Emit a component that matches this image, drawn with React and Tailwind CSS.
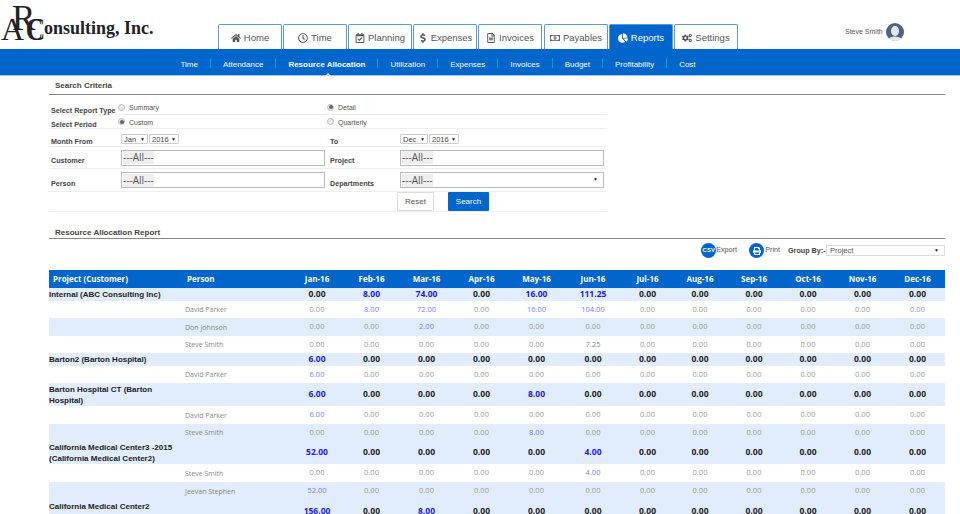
import { FaHome, FaRegClock, FaRegCalendarCheck, FaDollarSign, FaRegFileAlt, FaRegMoneyBillAlt, FaChartPie, FaCogs, FaPrint } from 'react-icons/fa';

const tabs = [
  { label: 'Home', icon: FaHome },
  { label: 'Time', icon: FaRegClock },
  { label: 'Planning', icon: FaRegCalendarCheck },
  { label: 'Expenses', icon: FaDollarSign },
  { label: 'Invoices', icon: FaRegFileAlt },
  { label: 'Payables', icon: FaRegMoneyBillAlt, extra: 'ml-px' },
  { label: 'Reports', icon: FaChartPie, active: true },
  { label: 'Settings', icon: FaCogs },
];

const subnav = ['Time', 'Attendance', 'Resource Allocation', 'Utilization', 'Expenses', 'Invoices', 'Budget', 'Profitability', 'Cost'];

const months = [
  { name: 'Jan-16', w: 'w-[54px]' },
  { name: 'Feb-16', w: 'w-[55px]' },
  { name: 'Mar-16', w: 'w-[55px]' },
  { name: 'Apr-16', w: 'w-[55px]' },
  { name: 'May-16', w: 'w-[55px]' },
  { name: 'Jun-16', w: 'w-[58px]' },
  { name: 'Jul-16', w: 'w-[51px]' },
  { name: 'Aug-16', w: 'w-[54px]' },
  { name: 'Sep-16', w: 'w-[54px]' },
  { name: 'Oct-16', w: 'w-[54px]' },
  { name: 'Nov-16', w: 'w-[55px]' },
  { name: 'Dec-16', w: 'w-[55px]' },
];

const z = (vals) => months.map((_, i) => vals[i] || '0.00');

const rows = [
  { project: 'Internal (ABC Consulting Inc)', h: 'h-[13px]', vals: z({ 1: '8.00', 2: '74.00', 4: '16.00', 5: '111.25' }) },
  { person: 'David Parker', h: 'h-[17px]', vals: z({ 1: '8.00', 2: '72.00', 4: '16.00', 5: '104.00' }) },
  { person: 'Don Johnson', h: 'h-[18px]', shade: true, vals: z({ 2: '2.00' }) },
  { person: 'Steve Smith', h: 'h-[17px]', vals: z({ 5: '7.25' }) },
  { project: 'Barton2 (Barton Hospital)', h: 'h-[13px]', vals: z({ 0: '6.00' }) },
  { person: 'David Parker', h: 'h-[17px]', vals: z({ 0: '6.00' }) },
  { project: 'Barton Hospital CT (Barton Hospital)', h: 'h-[23px]', vals: z({ 0: '6.00', 4: '8.00' }) },
  { person: 'David Parker', h: 'h-[18px]', vals: z({ 0: '6.00' }) },
  { person: 'Steve Smith', h: 'h-[17px]', shade: true, vals: z({ 4: '8.00' }) },
  { project: 'California Medical Center3 -2015 (California Medical Center2)', h: 'h-[23px]', vals: z({ 0: '52.00', 5: '4.00' }) },
  { person: 'Steve Smith', h: 'h-[18px]', vals: z({ 5: '4.00' }) },
  { person: 'Jeevan Stephen', h: 'h-[18px]', shade: true, vals: z({ 0: '52.00' }) },
  { project: 'California Medical Center2 (California Medical Center2)', h: 'h-[23px]', vals: z({ 0: '156.00', 2: '8.00' }) },
];

function Radio({ checked, label }) {
  return (
    <span className="flex items-center text-[7px] text-[#555] whitespace-nowrap">
      <span className="w-[7px] h-[7px] rounded-full border border-[#bbb] bg-[#e8e8e8] flex items-center justify-center mr-[4px] -mt-[2px] shrink-0">
        {checked && <span className="w-[4px] h-[4px] rounded-full bg-[#666]" />}
      </span>
      {label}
    </span>
  );
}

function MiniSelect({ value, w }) {
  return (
    <span className={`${w} h-[10px] border border-[#ccc] rounded-[1px] flex items-center justify-between px-[2px] text-[7.5px] text-[#444]`}>
      {value}
      <span className="text-[5px] text-[#222]">▼</span>
    </span>
  );
}

function AllBox({ caret }) {
  return (
    <div className="w-[204px] h-[16px] border border-[#bbb] flex items-center justify-between pl-px pr-[5px]">
      <span className="bg-[#eee] h-[13px] flex items-center text-[10px] text-[#555] font-['Open_Sans',sans-serif]">---All---</span>
      {caret && <span className="text-[5px] text-[#222]">▼</span>}
    </div>
  );
}

function Label({ children, className = '' }) {
  return <div className={`text-[7.2px] font-bold text-[#444] pl-[2px] whitespace-nowrap ${className}`}>{children}</div>;
}

function FormRow({ h, children }) {
  return (
    <div className={`${h} grid grid-cols-[69px_209px_73px_207px] items-center border-b border-[#eee]`}>
      {children}
    </div>
  );
}

export default function App() {
  return (
    <div className="w-[960px] h-[514px] overflow-hidden bg-white font-['Liberation_Sans',Arial,sans-serif]">
      {/* top */}
      <div className="h-[49px] relative flex">
        <div className="absolute left-0 top-0 w-[160px] h-[45px] font-['Liberation_Serif',serif] text-[#222]">
          <span className="absolute left-[1px] top-[13px] text-[32px] leading-none">A</span>
          <span className="absolute left-[12px] top-[1px] text-[35px] leading-none">R</span>
          <span className="absolute left-[26px] top-[14px] text-[31px] leading-none scale-x-80 origin-left">C</span>
          <span className="absolute left-[28px] top-[14px] text-[31px] leading-none scale-x-80 origin-left">C</span>
          <span className="absolute left-[44px] top-[19px] text-[18px] leading-none font-semibold whitespace-nowrap">onsulting, Inc.</span>
        </div>
        <div className="ml-[218px] mt-[24px] flex gap-px">
          {tabs.map((t) => {
            const Icon = t.icon;
            return (
              <div
                key={t.label}
                className={`w-[64px] h-[25px] pt-[2px] rounded-t-[2px] border border-b-0 border-[#5b9bd5] flex items-center justify-center gap-[3px] text-[9.5px] ${t.extra || ''} ${t.active ? 'bg-[#0066cc] text-white' : 'bg-white text-[#555]'}`}
              >
                <Icon className="text-[10px]" />
                {t.label}
              </div>
            );
          })}
        </div>
        <div className="absolute left-[845px] top-[23px] flex items-center gap-[3px]">
          <span className="text-[7px] text-[#555]">Steve Smith</span>
          <svg width="18" height="18" viewBox="0 0 18 18">
            <circle cx="9" cy="9" r="9" fill="#4f6288" />
            <ellipse cx="9" cy="8" rx="4" ry="5" fill="#e6eaef" />
            <path d="M2.5 16 C4 12.5 14 12.5 15.5 16 C13.5 18.5 4.5 18.5 2.5 16 Z" fill="#e6eaef" />
          </svg>
        </div>
      </div>

      {/* sub nav */}
      <div className="h-[27px] pt-[5px] pr-[84px] bg-[#0066cc] border-b border-[#9cc3ea] flex items-center justify-center relative">
        {subnav.map((s, i) => (
          <div key={s} className="flex items-center">
            {i > 0 && <span className="w-px h-[10px] -mt-[3px] bg-[#2a8fc4]" />}
            <span className={`px-[12px] text-[8px] text-white ${s === 'Resource Allocation' ? 'font-bold' : ''}`}>{s}</span>
          </div>
        ))}
        <span className="absolute left-[326px] bottom-[-3px] w-[4px] h-[4px] rotate-45 border-l border-t border-white" />
      </div>

      {/* search criteria */}
      <div className="ml-[49px] mr-[15px]">
        <div className="h-[19px] border-b border-[#888] flex items-end pl-[6px] pb-[2px] text-[8px] font-bold text-[#444]">Search Criteria</div>
        <div className="w-[558px] mt-[5px]">
          <FormRow h="h-[15px]">
            <Label className="mt-[6px]">Select Report Type</Label>
            <Radio label="Summary" />
            <Radio checked label="Detail" />
            <span />
          </FormRow>
          <FormRow h="h-[14px]">
            <Label className="mt-[5px]">Select Period</Label>
            <Radio checked label="Custom" />
            <Radio label="Quarterly" />
            <span />
          </FormRow>
          <FormRow h="h-[18px]">
            <Label className="mt-[8px]">Month From</Label>
            <div className="flex gap-[1px] mt-[2px] pl-[3px]">
              <MiniSelect value="Jan" w="w-[27px]" />
              <MiniSelect value="2016" w="w-[30px]" />
            </div>
            <Label className="mt-[8px] ml-px">To</Label>
            <div className="flex gap-[1px] mt-[2px]">
              <MiniSelect value="Dec" w="w-[28px]" />
              <MiniSelect value="2016" w="w-[30px]" />
            </div>
          </FormRow>
          <FormRow h="h-[22px]">
            <Label className="mt-[7px]">Customer</Label>
            <div className="pl-[3px]"><AllBox /></div>
            <Label className="mt-[7px] ml-px">Project</Label>
            <AllBox />
          </FormRow>
          <FormRow h="h-[23px]">
            <Label className="mt-[8px]">Person</Label>
            <div className="pl-[3px]"><AllBox /></div>
            <Label className="mt-[8px] ml-px">Departments</Label>
            <AllBox caret />
          </FormRow>
          <div className="h-[20px] border-b border-[#eee] flex items-center pl-[348px] gap-[14px]">
            <button className="w-[37px] h-[19px] bg-white border border-[#ddd] rounded-[1px] text-[8px] text-[#555]">Reset</button>
            <button className="w-[41px] h-[19px] bg-[#0066cc] rounded-[1px] text-[8px] text-white">Search</button>
          </div>
        </div>

        <div className="h-[27px] border-b border-[#888] flex items-end pl-[6px] text-[8px] leading-[10px] font-bold text-[#444]">Resource Allocation Report</div>

        {/* report toolbar */}
        <div className="h-[31px] flex items-start justify-end pt-[4px]">
          <div className="flex items-center text-[7.2px] text-[#555]">
            <span className="w-[15px] h-[15px] rounded-full bg-[#0066cc] text-white text-[6px] font-bold flex items-center justify-center">CSV</span>
            <span className="w-[20px]">Export</span>
          </div>
          <div className="flex items-center text-[7.2px] text-[#555] ml-[13px]">
            <span className="w-[15px] h-[15px] rounded-full bg-[#0066cc] text-white flex items-center justify-center mr-px">
              <FaPrint className="text-[8px]" />
            </span>
            <span>Print</span>
          </div>
          <span className="ml-[8px] mt-[3px] w-[38px] text-[7.2px] font-bold text-[#444] whitespace-nowrap">Group By:-</span>
          <div className="mt-[2px] w-[119px] h-[11px] border border-[#ddd] flex items-center justify-between pl-[3px] pr-[5px] text-[7.5px] text-[#555]">
            Project
            <span className="text-[5px] text-[#222]">▼</span>
          </div>
        </div>

        {/* table */}
        <table className="w-[896px] table-fixed border-collapse">
          <colgroup>
            <col className="w-[134px]" />
            <col className="w-[107px]" />
            {months.map((m) => <col key={m.name} className={m.w} />)}
          </colgroup>
          <thead>
            <tr className="h-[18px] bg-[#0066cc] text-white font-['Open_Sans',sans-serif] text-[8px] font-bold">
              <th className="text-left pl-[4px] font-bold">Project (Customer)</th>
              <th className="text-left pl-[4px] font-bold">Person</th>
              {months.map((m) => <th key={m.name} className="text-center font-bold">{m.name}</th>)}
            </tr>
          </thead>
          <tbody>
            {rows.map((r, i) => (
              <tr key={i} className={`${r.h} ${r.project || r.shade ? 'bg-[#e1edfc]' : 'bg-white'}`}>
                <td className="p-0 text-[8px] leading-[11px] font-bold text-[#222] align-middle">{r.project}</td>
                <td className="p-0 pl-[2px] pt-[2px] text-[7px] text-[#888] font-['Open_Sans',sans-serif]">{r.person}</td>
                {r.vals.map((v, j) => {
                  const nz = v !== '0.00';
                  const cls = r.project
                    ? `text-[8.5px] font-bold font-['Open_Sans',sans-serif] ${nz ? 'text-[#1a1ae0]' : 'text-[#222]'}`
                    : `text-[7.5px] font-['Open_Sans',sans-serif] ${nz ? 'text-[#7c7cf0]' : 'text-[#999]'}`;
                  return <td key={j} className={`p-0 text-center ${cls}`}>{v}</td>;
                })}
              </tr>
            ))}
          </tbody>
        </table>
      </div>
    </div>
  );
}
